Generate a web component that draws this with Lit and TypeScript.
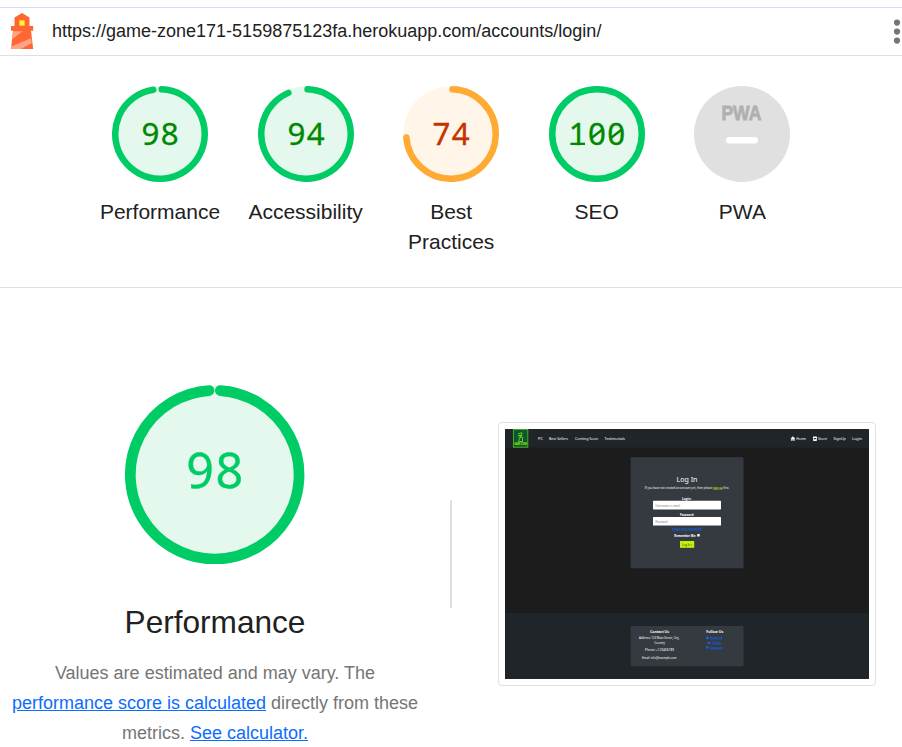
import { LitElement, html, svg, css } from "lit";
import { customElement, property } from "lit/decorators.js";

const point = (c: number, r: number, deg: number) => {
  const a = (deg * Math.PI) / 180;
  return `${(c + r * Math.sin(a)).toFixed(2)} ${(c - r * Math.cos(a)).toFixed(2)}`;
};

interface Gauge {
  label: string;
  score: string;
  tone: string;
  from: number;
  to: number;
}

const GAUGES: Gauge[] = [
  { label: "Performance", score: "98", tone: "pass", from: 2.2, to: 351.3 },
  { label: "Accessibility", score: "94", tone: "pass", from: 2, to: 336.8 },
  { label: "Best Practices", score: "74", tone: "average", from: 2, to: 265.5 },
  { label: "SEO", score: "100", tone: "pass", from: 0, to: 360 },
];

@customElement("score-ring")
export class ScoreRing extends LitElement {
  @property() score = "";
  @property() tone = "pass";
  @property({ type: Number }) size = 96;
  @property({ type: Number }) thickness = 6.5;
  @property({ type: Number }) from = 0;
  @property({ type: Number }) to = 360;
  @property({ type: Number }) fontsize = 31.3;
  @property({ type: Number }) step = 19.3;
  @property({ type: Number }) baseline = 59;

  static styles = css`
    :host { display: block; }
    svg { display: block; }
    text { font-family: "Noto Sans", sans-serif; text-anchor: middle; stroke-width: 0.3px; }
    .arc { fill: none; stroke-linecap: round; }
    .mark { stroke: #080; stroke-width: 2.3; fill: none; }
    .pass .base { fill: #e4f8ed; }
    .pass .arc { stroke: #00cc66; }
    .pass text { fill: #080; stroke: #080; }
    .average .base { fill: #fff5e8; }
    .average .arc { stroke: #ffaa33; }
    .average text { fill: #c33300; stroke: #c33300; }
    .hero .base { fill: #e4f8ed; }
    .hero .arc { stroke: #00cc66; }
    .hero text { fill: #00cc66; stroke: #00cc66; }
  `;

  private accent(d: string, x: number) {
    const y = this.baseline;
    if (d === "0") return svg`<path class="mark" d="M${x - 5.5} ${y - 7} l11 -8.5"></path>`;
    if (d === "1") return svg`<path class="mark" d="M${x - 7.3} ${y - 1.15} h14.6"></path>`;
    return "";
  }

  render() {
    const c = this.size / 2;
    const r = c - this.thickness / 2;
    const digits = [...this.score];
    const start = c - ((digits.length - 1) * this.step) / 2;
    return html`<svg class=${this.tone} width=${this.size} height=${this.size}>
      <circle class="base" cx=${c} cy=${c} r=${c - 0.3}></circle>
      ${this.to - this.from >= 360
        ? svg`<circle class="arc" cx=${c} cy=${c} r=${r} stroke-width=${this.thickness}></circle>`
        : svg`<path class="arc" stroke-width=${this.thickness}
            d="M${point(c, r, this.from)} A${r} ${r} 0 1 1 ${point(c, r, this.to)}"></path>`}
      ${digits.map(
        (d, i) => svg`<text x=${start + i * this.step} y=${this.baseline}
          font-size=${this.fontsize}>${d}</text>${this.accent(d, start + i * this.step)}`
      )}
    </svg>`;
  }
}

interface Caption {
  t: string;
  x: number;
  y: number;
  w: number;
  s: number;
  fill?: string;
  bold?: boolean;
}

const CAPTIONS: Caption[] = [
  { t: "PC", x: 33, y: 11, w: 5, s: 3.7 },
  { t: "Best Sellers", x: 44, y: 11, w: 19, s: 3.7 },
  { t: "Coming Soon", x: 70, y: 11, w: 23, s: 3.7 },
  { t: "Testimonials", x: 99.5, y: 11, w: 20.5, s: 3.7 },
  { t: "Home", x: 291.3, y: 11, w: 9.7, s: 3.7 },
  { t: "Store", x: 313, y: 11, w: 9, s: 3.7 },
  { t: "SignUp", x: 328.5, y: 11, w: 12.3, s: 3.7 },
  { t: "Login", x: 347, y: 11, w: 10, s: 3.7 },
  { t: "Log In", x: 171.5, y: 53.3, w: 21, s: 7.8 },
  { t: "If you have not created an account yet, then please", x: 139.8, y: 59.6, w: 67.5, s: 2.9 },
  { t: "sign up", x: 208, y: 59.6, w: 9.7, s: 2.9, fill: "#c6ff00" },
  { t: "first.", x: 218.6, y: 59.6, w: 5.6, s: 2.9 },
  { t: "Login:", x: 177, y: 71.2, w: 9.3, s: 3.3, bold: true },
  { t: "Username or email", x: 150.5, y: 77.6, w: 24.5, s: 3.1, fill: "#777" },
  { t: "Password:", x: 175, y: 87.3, w: 14, s: 3.3, bold: true },
  { t: "Password", x: 150.5, y: 93.6, w: 12, s: 3.1, fill: "#777" },
  { t: "Forgot your password?", x: 167, y: 100.7, w: 30.5, s: 3.2, fill: "#0d6efd" },
  { t: "Remember Me:", x: 169.3, y: 107.7, w: 21.8, s: 3.2, bold: true },
  { t: "Log In »", x: 177, y: 116.7, w: 10.5, s: 3.1, fill: "#344000" },
  { t: "Contact Us", x: 145, y: 204.2, w: 19, s: 3.6, bold: true },
  { t: "Address: 123 Main Street, City,", x: 134, y: 210.2, w: 40.3, s: 3.2 },
  { t: "Country", x: 149.3, y: 214.7, w: 10.8, s: 3.2 },
  { t: "Phone: +123456789", x: 140, y: 222, w: 29, s: 3.2 },
  { t: "Email: info@example.com", x: 137, y: 229.6, w: 34.5, s: 3.2 },
  { t: "Follow Us", x: 201.2, y: 204.2, w: 17, s: 3.6, bold: true },
  { t: "Facebook", x: 205.2, y: 210.2, w: 12.4, s: 3.1, fill: "#0d6efd" },
  { t: "Twitter", x: 207.3, y: 214.9, w: 8.9, s: 3.1, fill: "#0d6efd" },
  { t: "Instagram", x: 205.2, y: 219.5, w: 12.4, s: 3.1, fill: "#0d6efd" },
];

@customElement("page-thumbnail")
export class PageThumbnail extends LitElement {
  static styles = css`
    :host { display: block; border: 1px solid #e0e0e0; border-radius: 4px; padding: 6px; width: 364px; height: 250px; }
    svg { display: block; }
    text { font-family: "Noto Sans", sans-serif; }
    .logo { font-size: 3px; font-weight: 700; fill: #b6f000; }
  `;

  render() {
    return html`<svg width="364" height="250" viewBox="0 0 364 250">
      <rect width="364" height="250" fill="#1c1c1c"></rect>
      <rect width="364" height="18.8" fill="#202529"></rect>
      <rect y="184" width="364" height="66" fill="#202529"></rect>
      <rect x="8.4" y="0.4" width="14.4" height="17.8" fill="#07592f" stroke="#5cb51a" stroke-width="0.9"></rect>
      <path d="M13 5 l4 -1.4 M17.3 4 l-2 4 M13.5 8 h4 v4.5 h-4 M13.5 12 l2 -4 M13 6.5 h4" fill="none" stroke="#7dd026" stroke-width="0.9"></path>
      <text class="logo" x="9.2" y="15.8" textLength="12.8" lengthAdjust="spacingAndGlyphs">GAME ZONE</text>
      <path d="M285.7 9.5 L287.9 7.4 L290.1 9.5 H289.5 V11.7 H288.4 V10.2 H287.4 V11.7 H286.3 V9.5z" fill="#fff" stroke="#fff" stroke-width=".2"></path>
      <path d="M308.2 7.4 h3.5 l.5 1.5 h-.4 v3 h-3.6 v-3 h-.5z" fill="#fff"></path>
      <rect x="309" y="9.1" width="2" height="1.1" fill="#202529"></rect>
      <rect x="125.7" y="28.2" width="112.8" height="111" rx="1" fill="#343a40"></rect>
      <rect x="125.7" y="197" width="112.8" height="40.2" rx="1" fill="#343a40"></rect>
      <rect x="148" y="71.8" width="68" height="8.6" rx=".6" fill="#fff"></rect>
      <rect x="148" y="88" width="68" height="8.6" rx=".6" fill="#fff"></rect>
      <rect x="192.3" y="105" width="2.4" height="2.6" rx=".4" fill="#fff"></rect>
      <rect x="175" y="112" width="14.2" height="6.8" fill="#c0f50b"></rect>
      <path d="M167 101.3 h30.5 M205 210.7 h12.6 M207 215.4 h9.2 M205 220 h12.6" stroke="#0d5ed8" stroke-width=".5"></path>
      <path d="M201.2 207.7 h2.4 v2.4 h-2.4z M202.6 213 h2.8 v1.8 h-2.8z M201.4 217.2 h2 v2.4 h-2z" fill="#0d6efd"></path>
      <path d="M208 60.2 h9.7" stroke="#c6ff00" stroke-width=".4"></path>
      ${CAPTIONS.map(
        (c) => svg`<text x=${c.x} y=${c.y} font-size=${c.s} font-weight=${c.bold ? 700 : 400}
          fill=${c.fill ?? "#fff"} textLength=${c.w} lengthAdjust="spacingAndGlyphs">${c.t}</text>`
      )}
    </svg>`;
  }
}

@customElement("app-root")
export class AppRoot extends LitElement {
  static styles = css`
    :host { display: flow-root; width: 902px; height: 747px; overflow: hidden; background: #fff; color: #212121; font-family: "Liberation Sans", Arial, sans-serif; }
    .topbar { box-sizing: border-box; height: 49px; margin-top: 7px; border-top: 1px solid #d6def5; border-bottom: 1px solid #e0e0e0; display: flex; align-items: center; }
    .house { margin: -1px 18px 0 10px; flex: none; }
    .url { font-size: 18px; flex: 1; line-height: 24px; white-space: nowrap; padding-bottom: 2px; }
    .dots { flex: none; }
    .scores { box-sizing: border-box; height: 232px; border-bottom: 1px solid #e0e0e0; padding: 30px 0 0 87.2px; display: flex; }
    .gauge { width: 145.6px; display: flex; flex-direction: column; align-items: center; }
    .label { margin: 15px 0 0; font-size: 21px; line-height: 30px; text-align: center; }
    .narrow { width: 110px; }
    .pwa { display: block; }
    .pwa text { font: 700 21px "Liberation Sans", sans-serif; fill: #b0b0b0; stroke: #b0b0b0; stroke-width: .8px; }
    .category { display: flex; height: 459px; }
    .summary { width: 430px; display: flex; flex-direction: column; align-items: center; padding-top: 97px; box-sizing: border-box; }
    h1 { margin: 38px 0 0; font-size: 31.6px; font-weight: 400; line-height: 40px; }
    p { margin: 16px 0 0; width: 430px; font-size: 18px; line-height: 30px; text-align: center; color: #757575; white-space: nowrap; }
    a { color: #0c6cff; text-decoration: underline; }
    .divider { width: 2px; height: 108px; margin: 212px 46px 0 20px; background: #e0e0e0; }
    page-thumbnail { margin-top: 134px; flex: none; align-self: flex-start; }
  `;

  render() {
    return html`
      <header class="topbar">
        <svg class="house" width="24" height="36" viewBox="0 0 24 36">
          <path d="M12 0 L19.5 4.4 V13 H23.2 V17.8 H21 L23.2 36 H1 L3 17.8 H1 V13 H4.5 V4.4z" fill="#ff6633"></path>
          <path d="M3 18.2 H12.5 L1.9 26.6z M20.9 25.2 L21.8 30 L11 36 H1.2 V33.6z" fill="#ffa385"></path>
          <rect x="9.3" y="7.3" width="5.4" height="5.4" fill="#fff52e" stroke="#ffb02a" stroke-width=".5"></rect>
        </svg>
        <span class="url">https://game-zone171-5159875123fa.herokuapp.com/accounts/login/</span>
        <svg class="dots" width="9" height="26" viewBox="0 0 9 26" fill="#757575">
          <circle cx="4" cy="3.6" r="3.1"></circle><circle cx="4" cy="12.6" r="3.1"></circle><circle cx="4" cy="21.6" r="3.1"></circle>
        </svg>
      </header>
      <section class="scores">
        ${GAUGES.map(
          (g) => html`<div class="gauge">
            <score-ring .score=${g.score} .tone=${g.tone} .from=${g.from} .to=${g.to}></score-ring>
            <div class="label ${g.label === "Best Practices" ? "narrow" : ""}">${g.label}</div>
          </div>`
        )}
        <div class="gauge">
          <svg class="pwa" width="96" height="96">
            <circle cx="48" cy="48" r="48" fill="#e0e0e0"></circle>
            <text x="27.4" y="34" textLength="40" lengthAdjust="spacingAndGlyphs">PWA</text>
            <rect x="32" y="51" width="32" height="6.6" rx="3.3" fill="#fff"></rect>
          </svg>
          <div class="label">PWA</div>
        </div>
      </section>
      <section class="category">
        <div class="summary">
          <score-ring .score=${"98"} .tone=${"hero"} .size=${179.4} .thickness=${10.7} .from=${3.8} .to=${356.2}
            .fontsize=${48.5} .step=${29.3} .baseline=${102.8}></score-ring>
          <h1>Performance</h1>
          <p>
            Values are estimated and may vary. The<br />
            <a>performance score is calculated</a> directly from these<br />
            metrics. <a>See calculator.</a>
          </p>
        </div>
        <div class="divider"></div>
        <page-thumbnail></page-thumbnail>
      </section>
    `;
  }
}
